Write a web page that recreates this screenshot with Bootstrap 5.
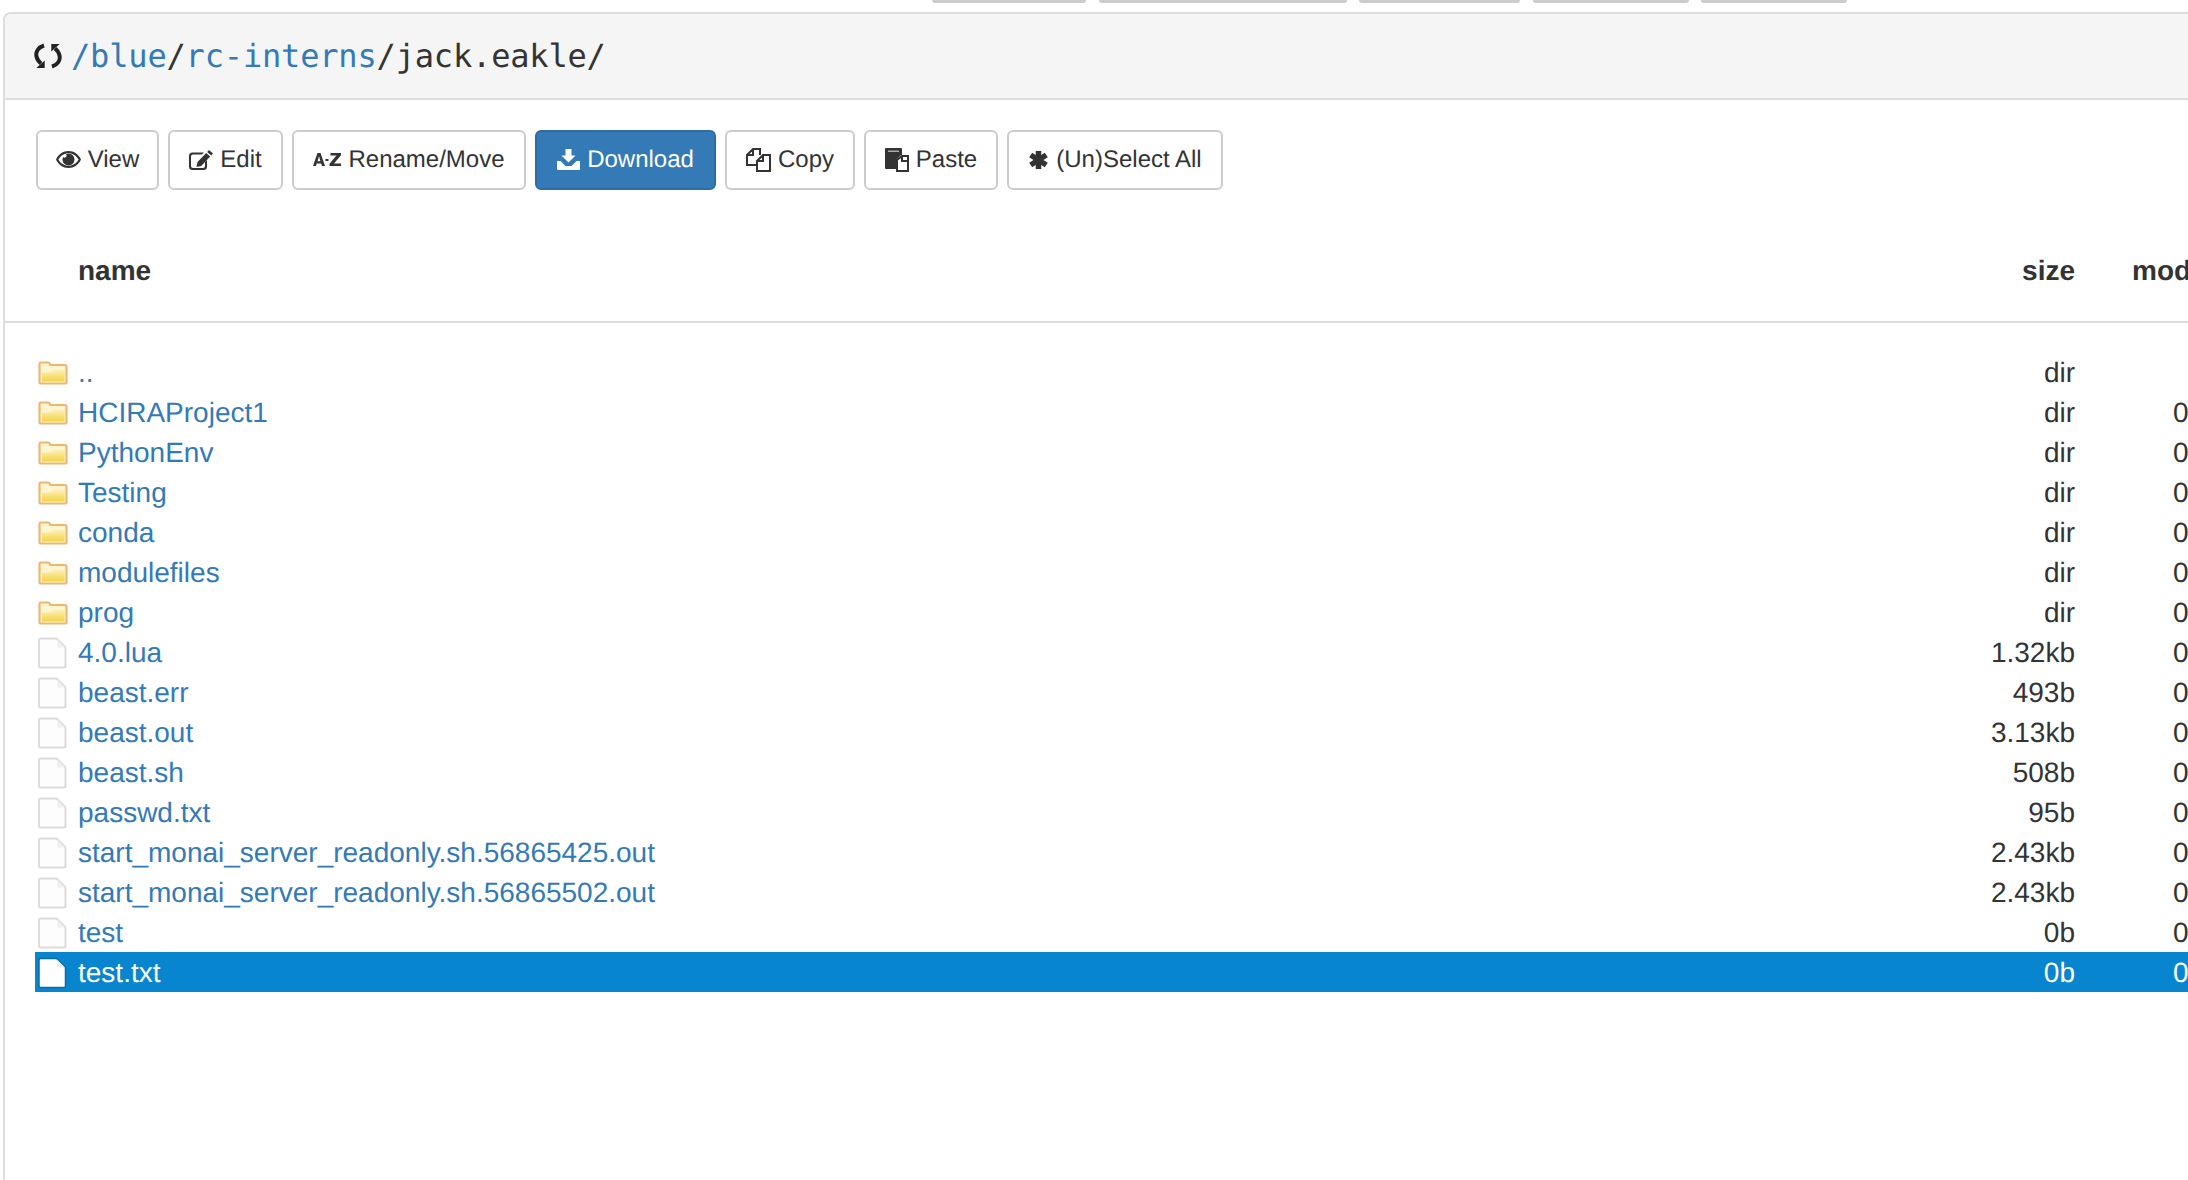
<!DOCTYPE html>
<html lang="en">
<head>
<meta charset="utf-8">
<title>File browser</title>
<link rel="stylesheet" href="https://cdn.jsdelivr.net/npm/bootstrap@5.3.0/dist/css/bootstrap.min.css">
<style>
html,body{height:100%;overflow:hidden;background:#fff}
body{font-family:"Liberation Sans",Arial,sans-serif;font-size:28px;color:#333;line-height:40px;text-rendering:geometricPrecision}
.topstubs{height:12px;display:flex;padding-left:932px;gap:12.500px}
.topstub{height:3px;background:#ccc;border-radius:0 0 5px 5px}
.stub-a{width:154px}.stub-b{width:248px}.stub-c{width:161px}.stub-d{width:156px}.stub-e{width:146px}
.fm-panel{margin-left:3px;border:2px solid #ddd;border-right:0;border-bottom:0;border-top-left-radius:8px;height:1168px;overflow:hidden;background:#fff}
.fm-head{height:86px;background:#f5f5f5;border-bottom:2px solid #ddd;padding-left:29px;display:flex;align-items:center;gap:9px}
.fm-path{font-family:"DejaVu Sans Mono","Liberation Mono",monospace;font-size:32px;color:#333;line-height:1;letter-spacing:-.17px}
.fm-path a,.fm-table a{color:#337ab7;text-decoration:none}
.fm-tools{padding:30px 0 0 31px;gap:9px}
.fm-btn{height:60px;padding:0;font-size:24px;line-height:56px;color:#333;background:#fff;border:2px solid #ccc;border-radius:6px;display:inline-flex;align-items:center;justify-content:center;gap:7px;white-space:nowrap}
.fm-btn svg{flex:none;fill:#333;margin-bottom:1px}
.fm-btn.fm-primary{background:#337ab7;border-color:#2e6da4;color:#fff}
.fm-btn.fm-primary svg{fill:#fff}
.w-view{width:123px}.w-edit{width:115px}.w-move{width:234px}.w-down{width:181px}.w-copy{width:130px}.w-paste{width:134px}.w-all{width:216px}
.fm-scroll{overflow:hidden;margin-top:30px}
.fm-table{table-layout:fixed;width:2400px;margin:0;border-collapse:collapse;--bs-table-bg:transparent;color:#333}
.fm-table th,.fm-table td{padding:0;border:0;vertical-align:middle;white-space:nowrap;box-shadow:none;background:transparent;color:inherit}
.fm-table th{font-weight:700;height:102px;border-bottom:2px solid #ddd}
.fm-table td{height:40px;line-height:38px;padding-top:2px}
.fm-table .spacer td{height:30px;padding:0;line-height:1}
.cell-gap{width:30px}
.cell-icon{width:43px}
.cell-size{width:124px;text-align:right}
.cell-mod{width:400px}
th.cell-mod{padding-left:57px!important}
td.cell-mod{padding-left:98px!important}
.cell-name{width:1873px}
.fm-table tr.is-selected td:not(:first-child){background:#0785ce}
.fm-table tr.is-selected td,.fm-table tr.is-selected a{color:#fff}
.fm-icon{display:block;margin-left:3px;filter:blur(.55px)}
</style>
</head>
<body>
<div class="topstubs">
<span class="topstub stub-a"></span><span class="topstub stub-b"></span><span class="topstub stub-c"></span><span class="topstub stub-d"></span><span class="topstub stub-e"></span>
</div>
<div class="fm-panel">
<div class="fm-head">
<svg width="28" height="28" viewBox="0 0 28 28"><path d="M10 3.500C4 5.500 1.500 10 2.500 14.500 3 17 4.500 19.500 7 21.500" fill="none" stroke="#222" stroke-width="4"/><path d="M2.300 26L10.700 18.500V26z" fill="#222"/><path d="M18 24.500C24 22.500 26.500 18 25.500 13.500 25 11 23.500 8.500 21 6.500" fill="none" stroke="#222" stroke-width="4"/><path d="M25.700 2L17.300 9.500V2z" fill="#222"/></svg>
<span class="fm-path"><a href="#">/blue</a>/<a href="#">rc-interns</a>/jack.eakle/</span>
</div>
<div class="d-flex fm-tools">
<span class="fm-btn w-view"><svg width="25" height="17" viewBox="0 0 25 17"><path fill-rule="evenodd" d="M12.500 0C7 0 2.500 3.200 0 8.500 2.500 13.800 7 17 12.500 17S22.500 13.800 25 8.500C22.500 3.200 18 0 12.500 0zM12.500 2.200C8.300 2.200 4.600 4.600 2.400 8.500 4.600 12.400 8.300 14.800 12.500 14.800S20.400 12.400 22.600 8.500C20.400 4.600 16.700 2.200 12.500 2.200z"/><path d="M12.500 2.500a6 6 0 1 1-6 6c0-1 .2-1.800.6-2.500a2 2 0 1 0 2.900-2.900c.7-.4 1.500-.6 2.500-.6z"/></svg>View</span>
<span class="fm-btn w-edit"><svg width="24" height="20" viewBox="0 0 24 20"><path d="M3.500 2.500H15l-2 2H4Q2 4.500 2 6.500V16q0 2 2 2h10q2 0 2-2v-4l2-2v6.500q0 3.500-3.500 3.500h-11Q0 20 0 16.500V6q0-3.500 3.500-3.500z"/><path d="M20 0l4 3.500-1.800 2-4-3.500zM17.200 3l4 3.500-9 9.500L7.500 17l1-5z"/></svg>Edit</span>
<span class="fm-btn w-move"><svg width="28" height="13" viewBox="0 0 28 13"><path fill-rule="evenodd" d="M4.500 0h3L12 13H9l-.8-2.500H3.700L3 13H0zM6 3.200L4.500 8.200h3zM12.500 6H15.500v2H12.500zM17.500 0H28v2.300L21 10.500h7V13H16.500v-2.300L23.500 2.500H17.500z"/></svg>Rename/Move</span>
<span class="fm-btn fm-primary w-down"><svg width="23" height="21" viewBox="0 0 23 21"><path d="M8.500 0h6v6.500h4l-7 7-7-7h4zM0 12h3.500l5 5h6l5-5H23v8q0 1-1 1H1q-1 0-1-1z"/></svg>Download</span>
<span class="fm-btn w-copy"><svg width="25" height="24" viewBox="0 0 25 24"><path fill="none" stroke="#333" stroke-width="2" d="M10 17H1V7l6-6h7v6M7 1v6H1M11 23V13l6-6h7v16zM17 7v6h-6"/></svg>Copy</span>
<span class="fm-btn w-paste"><svg width="24" height="24" viewBox="0 0 24 24"><path d="M1 0h15q1 0 1 1v6h-1l-5 5v9H1q-1 0-1-1V1q0-1 1-1z"/><path fill="#aaa" d="M3 2.500h11v1.500H3z"/><path fill="#fff" stroke="#333" stroke-width="2" d="M12 23V12l5-4h6v15z"/><path fill="none" stroke="#333" stroke-width="2" d="M17 8v5h6"/></svg>Paste</span>
<span class="fm-btn w-all"><svg width="21" height="18" viewBox="0 0 21 18"><path stroke="#333" stroke-width="5.500" d="M10.500 0V18M2.700 4L18.300 14M18.300 4L2.700 14"/></svg>(Un)Select All</span>
</div>
<div class="fm-scroll">
<table class="table fm-table">
<colgroup><col class="cell-gap"><col class="cell-icon"><col class="cell-name"><col class="cell-size"><col class="cell-mod"></colgroup>
<thead><tr><th></th><th></th><th>name</th><th class="cell-size">size</th><th class="cell-mod">modified</th></tr></thead>
<tbody id="rows">
<tr class="spacer"><td colspan="5"></td></tr>
</tbody>
</table>
</div>
</div>
<svg width="0" height="0" class="position-absolute">
<defs>
<linearGradient id="fy" x1="0" y1="0" x2="0" y2="1"><stop offset="0" stop-color="#fdf0b8"/><stop offset="1" stop-color="#f3d243"/></linearGradient>
<symbol id="ifolder" viewBox="0 0 30 24"><path d="M1.500 4.500V3q0-1.500 1.500-1.500h7q1.500 0 2 1.500l.5 1H27q1.500 0 1.500 1.500V21q0 1.500-1.500 1.500H3q-1.500 0-1.500-1.500z" fill="#fdf4d2" stroke="#eeb873" stroke-width="2.200"/><path d="M4 11.500h9l2-2.500h11.500v11.500H4z" fill="url(#fy)"/></symbol>
<symbol id="ifile" viewBox="0 0 30 32"><path d="M2.500 1.500h16l9 9V29q0 1.500-1.500 1.500H2.500Q1 30.500 1 29V3Q1 1.500 2.500 1.500z" fill="#fdfdfd" stroke="#dcdcdc" stroke-width="2"/><path d="M19 2.500v8h8" fill="#f0f0f0"/></symbol>
<symbol id="ifilesel" viewBox="0 0 30 32"><path d="M2.500 1.500h16l9 9V29q0 1.500-1.500 1.500H2.500Q1 30.500 1 29V3Q1 1.500 2.500 1.500z" fill="#fff" stroke="#0a6ea8" stroke-width="1.500"/><path d="M19 2.500v8h8" fill="#eee"/></symbol>
</defs>
</svg>
<script>
var data=[["d","..","dir",""],["d","HCIRAProject1","dir","08/15/2023"],["d","PythonEnv","dir","08/15/2023"],["d","Testing","dir","08/15/2023"],["d","conda","dir","08/15/2023"],["d","modulefiles","dir","08/15/2023"],["d","prog","dir","08/15/2023"],
["f","4.0.lua","1.32kb","08/15/2023"],["f","beast.err","493b","08/15/2023"],["f","beast.out","3.13kb","08/15/2023"],["f","beast.sh","508b","08/15/2023"],["f","passwd.txt","95b","08/15/2023"],["f","start_monai_server_readonly.sh.56865425.out","2.43kb","08/15/2023"],["f","start_monai_server_readonly.sh.56865502.out","2.43kb","08/15/2023"],["f","test","0b","08/15/2023"],["f","test.txt","0b","08/15/2023"]];
var h="";
data.forEach(function(r,i){
var sel=i===data.length-1;
var ic=r[0]==="d"?'<svg class="fm-icon" width="30" height="24"><use href="#ifolder"/></svg>':'<svg class="fm-icon" width="30" height="32"><use href="#'+(sel?'ifilesel':'ifile')+'"/></svg>';
h+='<tr'+(sel?' class="is-selected"':'')+'><td></td><td>'+ic+'</td><td><a href="#">'+r[1]+'</a></td><td class="cell-size">'+r[2]+'</td><td class="cell-mod">'+r[3]+'</td></tr>';
});
document.getElementById("rows").insertAdjacentHTML("beforeend",h);
</script>
<script src="https://cdn.jsdelivr.net/npm/bootstrap@5.3.0/dist/js/bootstrap.bundle.min.js"></script>
</body>
</html>
